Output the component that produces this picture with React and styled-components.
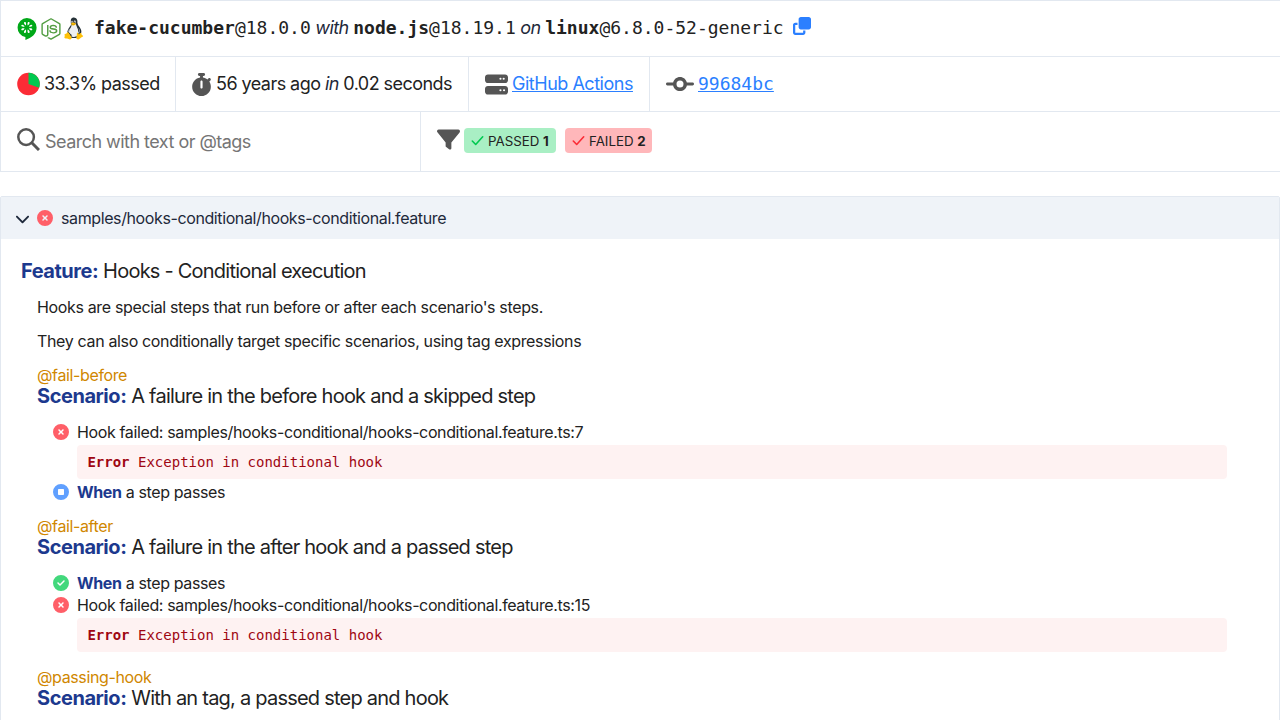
import React from "react";
import styled, { createGlobalStyle, css } from "styled-components";
import {
  FaNodeJs, FaClone, FaStopwatch, FaServer, FaCodeCommit, FaFilter,
  FaChevronDown, FaCircleXmark, FaCircleCheck, FaCircleStop,
} from "react-icons/fa6";
import { FcLinux } from "react-icons/fc";

const GlobalStyle = createGlobalStyle`
  *, *::before, *::after { box-sizing: border-box; }
  html { overflow: hidden; }
  body { margin: 0; background: #fff; color: #222; font: 16px/22px Inter, "Liberation Sans", sans-serif; letter-spacing: -0.37px; overflow: hidden; height: 720px; }
  svg { display: block; flex: none; }
`;
const mono = css`font-family: "DejaVu Sans Mono", "Liberation Mono", monospace; letter-spacing: 0;`;

const Summary = styled.header`
  border: 1px solid #e2e8f0;
  border-right: 0;
  font-size: 18px;
  line-height: 24px;
  letter-spacing: -0.55px;
`;
const SummaryRow = styled.div`
  display: flex;
  height: ${(p) => p.$height}px;
  & + & { border-top: 1px solid #e2e8f0; }
`;
const Cell = styled.div`
  display: flex;
  align-items: center;
  white-space: pre;
  width: ${(p) => (p.$width ? `${p.$width}px` : "auto")};
  padding-left: ${(p) => p.$inset ?? 16}px;
  & + & { border-left: 1px solid #e2e8f0; }
`;
const Logos = styled.div`
  display: flex;
  align-items: center;
  width: 70px;
  height: 24px;
  margin-right: 7px;
  gap: 1px;
  svg:last-child { margin: 0 0 1px -4px; }
`;
const Versions = styled.div`white-space: pre; margin-bottom: 1px;`;
const Mono = styled.span`${mono}`;
const Soft = styled.em`color: #1e293b;`;
const CopyButton = styled.button`
  border: 0;
  padding: 0;
  margin: 0 0 5px 9px;
  background: none;
  color: #2b7fff;
`;
const Glyph = styled.span`
  display: flex;
  flex: none;
  justify-content: center;
  color: #555;
  width: ${(p) => p.$width}px;
  margin-right: ${(p) => p.$gap ?? 4}px;
  margin-bottom: ${(p) => p.$lift ?? 0}px;
`;
const Link = styled.a`
  color: #2b7fff;
  text-decoration: underline;
  letter-spacing: -0.48px;
  ${(p) => p.$mono && mono}
`;
const SearchInput = styled.input`
  flex: 1;
  min-width: 0;
  border: 0;
  padding: 0;
  outline: 0;
  font: inherit;
  letter-spacing: -0.53px;
  background: none;
  &::placeholder { color: #757575; opacity: 1; }
`;
const Chip = styled.label`
  display: flex;
  align-items: center;
  height: 25px;
  width: ${(p) => p.$width}px;
  padding-left: 7px;
  margin: 0 9px 2px 0;
  gap: 4px;
  border-radius: 4px;
  background: ${(p) => p.$bg};
  font-size: 13.3px;
  letter-spacing: 0;
  svg { color: ${(p) => p.$tick}; }
`;

const Document = styled.main`
  margin-top: 24px;
  height: 560px;
  border: 1px solid #e2e8f0;
  border-radius: 2px 2px 0 0;
`;
const DocumentTitle = styled.div`
  display: flex;
  align-items: center;
  height: 42px;
  padding-left: 14px;
  background: #eff3f8;
  color: #1e293b;
  letter-spacing: -0.39px;
  svg:nth-child(2) { margin: 0 8px 0 7px; color: #ff5f68; }
`;
const Content = styled.div`padding: 20px 52px 0 20px;`;
const Keyword = styled.strong`color: #1c398e; font-weight: 700;`;
const Title = styled.h2`
  margin: 0;
  font-size: 20px;
  line-height: 24px;
  font-weight: 400;
  letter-spacing: -0.77px;
  ${Keyword} { letter-spacing: -0.46px; }
`;
const Children = styled.div`padding: 1px 0 0 16px;`;
const Paragraph = styled.p`margin: 12px 0 0; letter-spacing: -0.35px;`;
const Scenario = styled.section`margin-top: 14px;`;
const Tag = styled.div`color: #d08700; line-height: 18px;`;
const Steps = styled.ol`
  list-style: none;
  margin: 0;
  padding: 13px 0 0 16px;
`;
const Step = styled.li`
  display: grid;
  grid-template-columns: 16px 1fr;
  column-gap: 8px;
  svg { margin-top: 3px; color: ${(p) => p.$color}; }
`;
const ErrorBox = styled.pre`
  ${mono}
  grid-column: 2;
  margin: 2px 0;
  padding: 6px 10.4px;
  height: 34px;
  border-radius: 4px;
  background: #fef2f2;
  color: #9f0712;
  font-size: 14px;
  line-height: 22px;
`;

const seedAngles = [0, 45, 90, 135, 180, 225, 270, 315];
const CucumberLogo = () => (
  <svg width="22" height="24" viewBox="0 0 22 24">
    <path fill="#00a818" d="M9.8.9a9.7 9.7 0 0 1 9.8 9.7c0 6.6-5 10.4-11.2 12.3v-2.8A9.7 9.7 0 0 1 9.8.9z" />
    {seedAngles.map((a) => (
      <path key={a} d="M9.8 8.2c-.9-1.3-1.1-2.1-.9-2.9.2-.9 1.6-.9 1.8 0 .2.8 0 1.6-.9 2.9z" fill="#fff" transform={`rotate(${a + 22.5} 9.8 10.5)`} />
    ))}
  </svg>
);
const Pie = () => (
  <svg width="24" height="24" viewBox="0 0 24 24">
    <circle cx="11.5" cy="12" r="11.3" fill="#fb2c36" />
    <path d="M11.5 12V.7a11.3 11.3 0 0 1 10.6 15.1z" fill="#00c950" />
  </svg>
);
const SearchIcon = () => (
  <svg width="23" height="23" viewBox="0 0 23 23" fill="none" stroke="currentColor">
    <circle cx="9.1" cy="9.1" r="7.8" strokeWidth="2.5" />
    <path d="m14.8 14.8 7.2 7.2" strokeWidth="3" />
  </svg>
);
const Tick = () => (
  <svg width="13" height="13" viewBox="0 0 13 13" fill="none" stroke="currentColor" strokeWidth="1.6" strokeLinecap="round" strokeLinejoin="round">
    <path d="m1.3 7 3.4 3.5 7-7.7" />
  </svg>
);

const statuses = {
  failed: ["#ff5f68", FaCircleXmark],
  skipped: ["#60a0ff", FaCircleStop],
  passed: ["#42d87c", FaCircleCheck],
};
const StepItem = ({ status, children, error }) => {
  const [color, Icon] = statuses[status];
  return (
    <Step $color={color}>
      <Icon size={16} />
      <div>{children}</div>
      {error && <ErrorBox><b>Error</b> {error}</ErrorBox>}
    </Step>
  );
};
const ScenarioBlock = ({ tag, name, children }) => (
  <Scenario>
    <Tag>{tag}</Tag>
    <Title><Keyword>Scenario:</Keyword> {name}</Title>
    <Steps>{children}</Steps>
  </Scenario>
);

export default function App() {
  return (
    <>
      <GlobalStyle />
      <Summary>
        <SummaryRow $height={55}>
          <Cell>
            <Logos>
              <CucumberLogo />
              <FaNodeJs size={22} color="#539e43" />
              <FcLinux size={29} />
            </Logos>
            <Versions>
              <Mono><b>fake-cucumber</b>@18.0.0</Mono> <Soft>with</Soft> <Mono><b>node.js</b>@18.19.1</Mono> <Soft>on</Soft> <Mono><b>linux</b>@6.8.0-52-generic</Mono>
            </Versions>
            <CopyButton aria-label="Copy"><FaClone size={18} /></CopyButton>
          </Cell>
        </SummaryRow>
        <SummaryRow $height={55}>
          <Cell $width={174}>
            <Glyph $width={24} $gap={3}><Pie /></Glyph>33.3% passed
          </Cell>
          <Cell $width={293} $inset={15}>
            <Glyph $width={20} $gap={5}><FaStopwatch size={23} /></Glyph>56 years ago <Soft>in</Soft> 0.02 seconds
          </Cell>
          <Cell $width={181}>
            <Glyph $width={23}><FaServer size={23} /></Glyph><Link>GitHub Actions</Link>
          </Cell>
          <Cell>
            <Glyph $width={28}><FaCodeCommit size={28} /></Glyph><Link $mono>99684bc</Link>
          </Cell>
        </SummaryRow>
        <SummaryRow $height={60}>
          <Cell $width={419}>
            <Glyph $width={23} $gap={5} $lift={4}><SearchIcon /></Glyph>
            <SearchInput placeholder="Search with text or @tags" />
          </Cell>
          <Cell>
            <Glyph $width={23} $lift={4}><FaFilter size={23} /></Glyph>
            <Chip $width={92} $bg="#a9efc4" $tick="#00c950"><Tick /><span>PASSED <b>1</b></span></Chip>
            <Chip $width={87} $bg="#ffb7ba" $tick="#fb2c36"><Tick /><span>FAILED <b>2</b></span></Chip>
          </Cell>
        </SummaryRow>
      </Summary>
      <Document>
        <DocumentTitle>
          <FaChevronDown size={15} />
          <FaCircleXmark size={16} />
          samples/hooks-conditional/hooks-conditional.feature
        </DocumentTitle>
        <Content>
          <Title><Keyword>Feature:</Keyword> Hooks - Conditional execution</Title>
          <Children>
            <Paragraph>Hooks are special steps that run before or after each scenario's steps.</Paragraph>
            <Paragraph>They can also conditionally target specific scenarios, using tag expressions</Paragraph>
            <ScenarioBlock tag="@fail-before" name="A failure in the before hook and a skipped step">
              <StepItem status="failed" error="Exception in conditional hook">Hook failed: samples/hooks-conditional/hooks-conditional.feature.ts:7</StepItem>
              <StepItem status="skipped"><Keyword>When</Keyword> a step passes</StepItem>
            </ScenarioBlock>
            <ScenarioBlock tag="@fail-after" name="A failure in the after hook and a passed step">
              <StepItem status="passed"><Keyword>When</Keyword> a step passes</StepItem>
              <StepItem status="failed" error="Exception in conditional hook">Hook failed: samples/hooks-conditional/hooks-conditional.feature.ts:15</StepItem>
            </ScenarioBlock>
            <ScenarioBlock tag="@passing-hook" name="With an tag, a passed step and hook" />
          </Children>
        </Content>
      </Document>
    </>
  );
}
